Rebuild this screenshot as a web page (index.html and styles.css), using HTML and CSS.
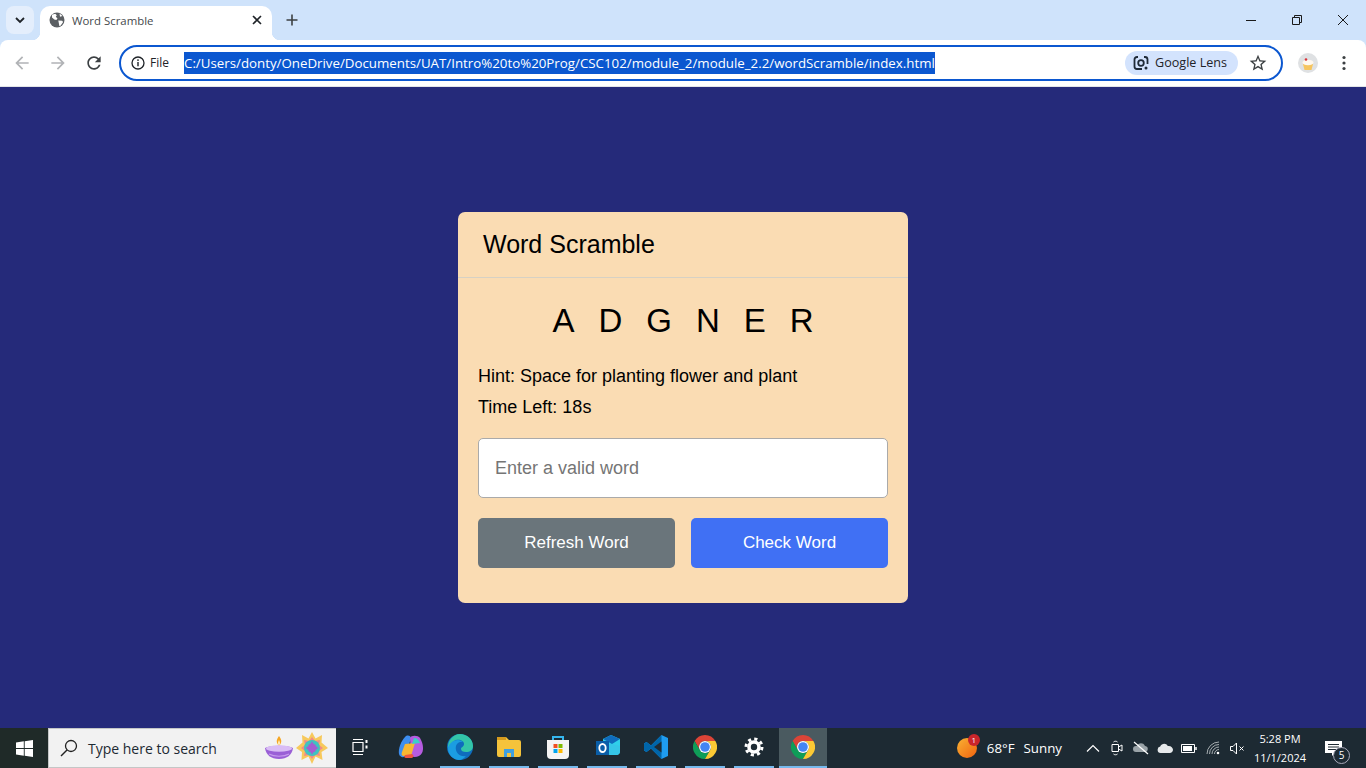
FILE: index.html
```html
<!DOCTYPE html>
<html>
<head>
<meta charset="utf-8">
<title>Word Scramble</title>
<link rel="stylesheet" href="styles.css">
</head>
<body>
<svg class="defs" width="0" height="0">
  <symbol id="chrome" viewBox="0 0 24 24">
    <path fill="#db4437" d="M12 0A12 12 0 0 0 1.6 6L6.8 15A6 6 0 0 1 12 6H22.4A12 12 0 0 0 12 0Z"/>
    <path fill="#0f9d58" d="M1.6 6A12 12 0 0 0 12 24L17.2 15A6 6 0 0 1 6.8 15Z"/>
    <path fill="#fcc934" d="M22.4 6H12A6 6 0 0 1 17.2 15L12 24A12 12 0 0 0 22.4 6Z"/>
    <circle cx="12" cy="12" r="6" fill="#fff"/>
    <circle cx="12" cy="12" r="4.8" fill="#4285f4"/>
  </symbol>
</svg>

<!-- browser top -->
<header class="browser">
  <div class="tabstrip">
    <button class="tabsearch">
      <svg width="12" height="12" viewBox="0 0 12 12"><path d="M2 4l4 4 4-4" fill="none" stroke="#1f2328" stroke-width="1.8"/></svg>
    </button>
    <div class="tab">
      <svg class="favicon" width="16" height="16" viewBox="0 0 16 16"><circle cx="8" cy="8" r="7.5" fill="#5b5f63"/><path fill="#fff" d="M3 2.8l3.2-1 1.6 1.4-1 1.6 1.7 1.6-1.2 1.6-2-.6L3 5.4zM9.3 8.5l3.8.3 1 1.2-2.4 3.6-1.3.6-.6-3.3zM10.5 1.500l3 2.4-2.500.8z"/></svg>
      <span class="tabtitle">Word Scramble</span>
      <svg class="tabclose" width="10" height="10" viewBox="0 0 10 10"><path d="M1 1l8 8M9 1l-8 8" stroke="#1f2328" stroke-width="1.6"/></svg>
    </div>
    <svg class="newtab" width="12" height="12" viewBox="0 0 12 12"><path d="M6 .5v11M.5 6h11" stroke="#3c4043" stroke-width="1.6"/></svg>
    <div class="wincontrols">
      <svg width="10" height="10" viewBox="0 0 10 10"><path d="M0 5.5h10" stroke="#1a1a1a"/></svg>
      <svg width="10" height="10" viewBox="0 0 10 10"><path d="M.5 2.5h7v7h-7zM2.5 2.5v-2h7v7h-2" fill="none" stroke="#1a1a1a"/></svg>
      <svg width="10" height="10" viewBox="0 0 10 10"><path d="M0 0l10 10M10 0L0 10" stroke="#1a1a1a"/></svg>
    </div>
  </div>
  <div class="toolbar">
    <svg class="navicon" width="20" height="20" viewBox="0 0 24 24"><path fill="#b1b3b6" d="M20 11H7.83l5.59-5.59L12 4l-8 8 8 8 1.41-1.41L7.83 13H20v-2z"/></svg>
    <svg class="navicon" width="20" height="20" viewBox="0 0 24 24"><path fill="#b1b3b6" d="M4 11h12.17l-5.59-5.59L12 4l8 8-8 8-1.41-1.41L16.17 13H4v-2z"/></svg>
    <svg class="navicon" width="20" height="20" viewBox="0 0 24 24"><path fill="#3c4043" d="M17.65 6.35C16.2 4.9 14.21 4 12 4c-4.42 0-7.99 3.58-7.99 8s3.57 8 7.99 8c3.73 0 6.84-2.55 7.73-6h-2.08c-.82 2.33-3.04 4-5.65 4-3.31 0-6-2.69-6-6s2.69-6 6-6c1.66 0 3.14.69 4.22 1.78L13 11h7V4l-2.35 2.35z"/></svg>
    <div class="omnibox">
      <svg class="infoicon" width="14" height="14" viewBox="0 0 14 14"><circle cx="7" cy="7" r="6" fill="none" stroke="#1f2328" stroke-width="1.3"/><path d="M7 6v4.2" stroke="#1f2328" stroke-width="1.4"/><circle cx="7" cy="4.1" r=".9" fill="#1f2328"/></svg>
      <span class="filelabel">File</span>
      <span class="url">C:/Users/donty/OneDrive/Documents/UAT/Intro%20to%20Prog/CSC102/module_2/module_2.2/wordScramble/index.html</span>
      <span class="lens">
        <svg width="16" height="16" viewBox="0 0 16 16"><path d="M5 2H4a2.500 2.500 0 0 0-2.500 2.500v7A2.500 2.500 0 0 0 4 14h5M11 2h1a2.500 2.500 0 0 1 2.500 2.500V9" fill="none" stroke="#1f2a37" stroke-width="1.8"/><circle cx="8" cy="8" r="2.800" fill="none" stroke="#1f2a37" stroke-width="1.800"/><circle cx="13" cy="13" r="1.500" fill="#1f2a37"/></svg>
        Google Lens
      </span>
      <svg class="star" width="20" height="20" viewBox="0 0 24 24"><path fill="#3c4043" d="M22 9.240l-7.190-.62L12 2 9.190 8.630 2 9.240l5.460 4.730L5.820 21 12 17.270 18.180 21l-1.630-7.030L22 9.240zM12 15.400l-3.760 2.270 1-4.280-3.320-2.880 4.380-.38L12 6.100l1.710 4.040 4.380.38-3.320 2.880 1 4.280L12 15.400z"/></svg>
    </div>
    <div class="avatar">
      <svg width="20" height="20" viewBox="0 0 20 20"><circle cx="10" cy="10" r="10" fill="#dfe1e3"/><path d="M5 11h10l-1.500 6h-7z" fill="#f6c55f"/><ellipse cx="10" cy="9.500" rx="5.500" ry="2.800" fill="#fff8ee"/><circle cx="8" cy="6.500" r="1.300" fill="#d8333a"/></svg>
    </div>
    <svg class="kebab" width="4" height="16" viewBox="0 0 4 16"><circle cx="2" cy="2.500" r="1.600" fill="#3c4043"/><circle cx="2" cy="8" r="1.600" fill="#3c4043"/><circle cx="2" cy="13.500" r="1.600" fill="#3c4043"/></svg>
  </div>
</header>

<!-- the game -->
<main class="page">
  <section class="card">
    <h2 class="card-title">Word Scramble</h2>
    <div class="card-body">
      <p class="scrambled">ADGNER</p>
      <p class="info">Hint: Space for planting flower and plant</p>
      <p class="info">Time Left: 18s</p>
      <input class="word-input" type="text" placeholder="Enter a valid word">
      <div class="btn-row">
        <button class="btn btn-refresh">Refresh Word</button>
        <button class="btn btn-check">Check Word</button>
      </div>
    </div>
  </section>
</main>

<!-- windows taskbar -->
<footer class="taskbar">
  <div class="start">
    <svg width="17" height="17" viewBox="0 0 17 17"><path fill="#fff" d="M0 2.400l7.800-1.100v6.800H0zM8.700 1.200L17 0v8.100H8.700zM0 9h7.800v6.800L0 14.600zM8.700 9H17v8l-8.300-1.200z"/></svg>
  </div>
  <div class="search">
    <svg width="18" height="18" viewBox="0 0 18 18"><circle cx="11" cy="7" r="5.500" fill="none" stroke="#222" stroke-width="1.300"/><path d="M7 11l-6 6" stroke="#222" stroke-width="1.500"/></svg>
    <span class="search-text">Type here to search</span>
    <svg class="diya" width="30" height="24" viewBox="0 0 30 24"><path d="M15 0c2.500 3.500 3.500 6 0 10-3.500-4-2.500-6.500 0-10z" fill="#f5a623"/><path d="M15 4c1 2 1.500 3.500 0 6-1.500-2.500-1-4 0-6z" fill="#fff3c4"/><path d="M1 12c6-3 22-3 28 0-1 7-6 11-14 11S2 19 1 12z" fill="#9a5fd6"/><ellipse cx="15" cy="12.500" rx="13" ry="3.200" fill="#d9bdf5"/><path d="M5 18c5 3 15 3 20 0" fill="none" stroke="#c79bee" stroke-width="1.200"/></svg>
    <svg class="rangoli" width="32" height="32" viewBox="0 0 32 32"><path d="M16 0l3.500 6.500L26 3l-.5 7.500L32 16l-6.500 4 1 8-7-3.500L16 32l-3.500-7.500-7 3.500.5-8L0 16l6.500-5.500L6 3l6.500 3.500z" fill="#f7c95c"/><path d="M16 5l3 4 5-1-1 5 4 3-4 3 1 5-5-1-3 4-3-4-5 1 1-5-4-3 4-3-1-5 5 1z" fill="#f08a8a"/><circle cx="16" cy="16" r="8" fill="#3fc4c0"/><path d="M16 9l2 4.500 4.500 2.500-4.500 2.500-2 4.500-2-4.500-4.500-2.500 4.500-2.500z" fill="#a35fd0"/><circle cx="16" cy="16" r="4.500" fill="#a35fd0"/></svg>
  </div>
  <div class="apps">
    <div class="app taskview">
      <svg width="16" height="16" viewBox="0 0 16 16"><path d="M1 3.500h10v9H1zM1 .5h10M1 15.500h10" fill="none" stroke="#fff" stroke-width="1.200"/><path d="M14.500 1v3M14.500 6.500v3" stroke="#fff" stroke-width="2"/></svg>
    </div>
    <div class="app">
      <svg width="26" height="24" viewBox="0 0 26 24"><path d="M7 2c2-2 5-2 6 1l-5 17c-1 3-6 3-7-1-1-5 2-13 6-17z" fill="#3d8ef0"/><path d="M12 3c1-3 8-3 10 0 3 5 4 11 2 15-2 4-8 5-11 3z" fill="#b65ce0"/><path d="M7 9l10-1-4 13H6c-2 0-3-1-2-4z" fill="#f7b733"/><path d="M16 3c3 0 5 2 6 5l-8 1z" fill="#3bd0c7"/><path d="M7 20l7-1c2 1 2 3 0 4H8c-2 0-2-2-1-3z" fill="#f0553f"/></svg>
    </div>
    <div class="app running">
      <svg width="26" height="26" viewBox="0 0 26 26"><circle cx="13" cy="13" r="13" fill="#0f6cbd"/><path d="M13 0c7 0 13 5 13 12 0 4-3 6-7 6-3 0-5-1-5-3 0-2 3-2 3-5 0-3-4-5-8-4C6 7 2 11 1 15 0 7 6 0 13 0z" fill="#33c5a8"/><path d="M1 15c0-5 5-9 10-9 2 0 4 1 5 2-5-1-8 3-7 8 1 4 5 7 10 6-2 2-4 4-7 4C7 26 1 21 1 15z" fill="#1b9de2"/></svg>
    </div>
    <div class="app running">
      <svg width="26" height="22" viewBox="0 0 26 22"><path d="M1 3a2 2 0 0 1 2-2h7l3 3h10a2 2 0 0 1 2 2v13a2 2 0 0 1-2 2H3a2 2 0 0 1-2-2z" fill="#f5c33b"/><path d="M1 1h9v3H1z" fill="#d59a1e"/><path d="M8 13h10v8h-3v-4h-4v4H8z" fill="#3f9fe0"/></svg>
    </div>
    <div class="app running">
      <svg width="24" height="24" viewBox="0 0 24 24"><path d="M7 5V2h10v3" fill="none" stroke="#35b6ef" stroke-width="2"/><path d="M1 5h22v15a4 4 0 0 1-4 4H5a4 4 0 0 1-4-4z" fill="#f4f4f4"/><path d="M7.500 9h4v4h-4z" fill="#f25022"/><path d="M12.500 9h4v4h-4z" fill="#7fba00"/><path d="M7.500 14h4v4h-4z" fill="#00a4ef"/><path d="M12.500 14h4v4h-4z" fill="#ffb900"/></svg>
    </div>
    <div class="app running">
      <svg width="25" height="24" viewBox="0 0 25 24"><path d="M8 4l8-4 9 4v12a4 4 0 0 1-4 4H8z" fill="#2fd0ea"/><path d="M8 4l8-4 9 4-8 5z" fill="#0f6cbd"/><path d="M8 10l9-1 8 2v5a4 4 0 0 1-4 4H8z" fill="#35c6e8"/><path d="M1 6h13v14H1z" fill="#0a5ea8"/><ellipse cx="7.500" cy="13" rx="3.200" ry="4" fill="none" stroke="#fff" stroke-width="1.800"/></svg>
    </div>
    <div class="app running">
      <svg width="24" height="24" viewBox="0 0 24 24"><path d="M17.500 0L24 3v18l-6.500 3L7 13.500 2.500 17 0 15.500V8.500L2.500 7 7 10.500z" fill="#1f9cf0"/><path d="M17.500 0L7 10.500 2.500 7 0 8.500v7L2.500 17 7 13.500 17.500 24z" fill="#0065a9"/><path d="M17.500 6.500L10 12l7.500 5.500z" fill="#1e2a33"/></svg>
    </div>
    <div class="app running">
      <svg width="24" height="24"><use href="#chrome"/></svg>
    </div>
    <div class="app running">
      <svg width="20" height="20" viewBox="0 0 20 20"><circle cx="10" cy="10" r="5" fill="none" stroke="#fff" stroke-width="3.600"/><circle cx="10" cy="10" r="8" fill="none" stroke="#fff" stroke-width="3" stroke-dasharray="3.140 3.140"/></svg>
    </div>
    <div class="app running active">
      <svg width="24" height="24"><use href="#chrome"/></svg>
    </div>
  </div>
  <div class="tray">
    <div class="weather">
      <span class="sun"><span class="sun-badge">1</span></span>
      <span class="temp">68°F</span>
      <span class="cond">Sunny</span>
    </div>
    <div class="trayicons">
      <span class="slot"><svg width="14" height="8" viewBox="0 0 14 8"><path d="M1 7.500l6-6 6 6" fill="none" stroke="#fff" stroke-width="1.200"/></svg></span>
      <span class="slot"><svg width="12" height="16" viewBox="0 0 12 16"><path d="M1 4.500h6.500v7H1zM7.500 7l3.500-2v6l-3.500-2zM2.500 2c1-1 3-1 4 0M2.500 14c1 1 3 1 4 0" fill="none" stroke="#fff"/></svg></span>
      <span class="slot"><svg width="16" height="14" viewBox="0 0 16 14"><path d="M3 11a3 3 0 0 1 0-6h1c1-3 6-4 8 0 3 0 4 4 1 6z" fill="#9aa3a8"/><path d="M1 1l14 12" stroke="#fff" stroke-width="1.200"/></svg></span>
      <span class="slot"><svg width="16" height="10" viewBox="0 0 16 10"><path d="M3.500 10a3.300 3.300 0 0 1-.3-6.500C4.500.5 9-.5 10.800 3c3-.5 5.200 1.500 5.200 3.800 0 2-1.500 3.200-3.200 3.200z" fill="#e6e9eb"/></svg></span>
      <span class="slot"><svg width="16" height="9" viewBox="0 0 16 9"><path d="M.5.5h13v8H.5z" fill="none" stroke="#fff"/><path d="M2 2h9v5H2z" fill="#fff"/><path d="M15 3v3" stroke="#fff" stroke-width="1.500"/></svg></span>
      <span class="slot"><svg width="14" height="14" viewBox="0 0 14 14"><path d="M1 13A12 12 0 0 1 13 1M3.500 13A9.500 9.500 0 0 1 13 3.500M6 13a7 7 0 0 1 7-7M8.500 13A4.500 4.500 0 0 1 13 8.500" fill="none" stroke="#c9ced1" stroke-width=".8"/><circle cx="12" cy="12" r="1.300" fill="#fff"/></svg></span>
      <span class="slot"><svg width="15" height="13" viewBox="0 0 15 13"><path d="M.5 4.500h2.500L6.500 1v11L3 8.500H.5z" fill="none" stroke="#fff"/><path d="M9.500 4.500l4 4M13.500 4.500l-4 4" stroke="#fff"/></svg></span>
    </div>
    <div class="clock">
      <span>5:28 PM</span>
      <span>11/1/2024</span>
    </div>
    <div class="notif">
      <svg width="17" height="15" viewBox="0 0 17 15"><path d="M0 0h17v12h-7l-3 3v-3H0z" fill="#fff"/><path d="M3 3.500h11M3 6h11M3 8.500h8" stroke="#1e2a33"/></svg>
      <span class="notif-count">5</span>
    </div>
  </div>
</footer>
</body>
</html>
```

FILE: styles.css
```css
* {
  box-sizing: border-box;
}
html, body {
  height: 100%;
}
body {
  margin: 0;
  display: flex;
  flex-direction: column;
  height: 768px;
  overflow: hidden;
  background-color: #252a7a;
  font-family: "Liberation Sans", Arial, sans-serif;
}
.defs {
  position: absolute;
}

/* browser top */
.browser {
  height: 87px;
  flex: none;
  background-color: #cfe3fb;
}
.tabstrip {
  height: 40px;
  display: flex;
  align-items: flex-end;
  padding-left: 6px;
}
.tabsearch {
  width: 28px;
  height: 28px;
  margin-bottom: 6px;
  border: none;
  border-radius: 8px;
  background-color: #e4eefc;
  display: flex;
  align-items: center;
  justify-content: center;
  padding: 0;
}
.tab {
  position: relative;
  width: 232px;
  height: 34px;
  margin-left: 6px;
  padding: 0 10px 6px 9px;
  background-color: #fff;
  border-radius: 10px 10px 0 0;
  display: flex;
  align-items: center;
}
/* little curves where the tab meets the toolbar */
.tab::before, .tab::after {
  content: "";
  position: absolute;
  bottom: 0;
  width: 8px;
  height: 8px;
}
.tab::before {
  left: -8px;
  background: radial-gradient(circle at 0 0, transparent 8px, #fff 8.500px);
}
.tab::after {
  right: -8px;
  background: radial-gradient(circle at 100% 0, transparent 8px, #fff 8.500px);
}
.tabtitle {
  margin-left: 7px;
  flex: 1;
  font-family: "Open Sans", sans-serif;
  font-size: 11.400px;
  color: #45494d;
}
.newtab {
  margin: 0 0 14px 14px;
}
.wincontrols {
  margin-left: auto;
  height: 40px;
  display: flex;
  align-items: center;
  gap: 36px;
  padding: 0 18px 0 0;
}
.toolbar {
  height: 47px;
  background-color: #fff;
  border-bottom: 1px solid #e3e5e8;
  border-radius: 8px 8px 0 0;
  display: flex;
  align-items: center;
  padding: 0 13px 1px 12px;
}
.navicon {
  margin-right: 16px;
}
.navicon:nth-child(3) {
  margin-right: 15px;
}
.omnibox {
  width: 1164px;
  height: 36px;
  border: 2px solid #0b57d0;
  border-radius: 18px;
  display: flex;
  align-items: center;
  padding: 0 13px 0 10px;
  font-family: "Open Sans", sans-serif;
  color: #1f2328;
}
.filelabel {
  margin-left: 5px;
  font-size: 12px;
  width: 34px;
}
.url {
  background-color: #0b57d0;
  color: #fff;
  font-size: 13.300px;
  line-height: 22px;
  height: 22px;
  white-space: nowrap;
}
.lens {
  margin-left: auto;
  height: 24px;
  width: 113px;
  border-radius: 12px;
  background-color: #d3e3fd;
  display: flex;
  align-items: center;
  gap: 6px;
  padding-left: 8px;
  font-size: 12.600px;
  white-space: nowrap;
}
.star {
  margin-left: 10px;
}
.avatar {
  margin-left: 15px;
  width: 20px;
  height: 20px;
}
.kebab {
  margin-left: 24px;
}

/* the game */
.page {
  flex: 1;
  display: flex;
  align-items: center;
  justify-content: center;
}
.card {
  width: 450px;
  background-color: #fadcb3;
  border-radius: 7px;
}
.card-title {
  margin: 0;
  height: 66px;
  padding-left: 25px;
  line-height: 65px;
  font-size: 25px;
  font-weight: 400;
  color: #000;
  border-bottom: 1px solid #d6d1c4;
}
.card-body {
  padding: 20px 20px 35px;
}
.scrambled {
  margin: 0 -24px 21px 0;
  font-size: 33px;
  line-height: 46px;
  letter-spacing: 24px;
  text-align: center;
  color: #000;
}
.info {
  margin: 0 0 9px;
  font-size: 18px;
  line-height: 22px;
  color: #000;
}
.word-input {
  display: block;
  width: 100%;
  height: 60px;
  margin-top: 20px;
  padding: 0 16px;
  border: 1px solid #aaa;
  border-radius: 5px;
  font-family: inherit;
  font-size: 18px;
  background-color: #fff;
}
.word-input::placeholder {
  color: #757575;
}
.btn-row {
  display: flex;
  gap: 16px;
  margin-top: 20px;
}
.btn {
  flex: 1;
  height: 50px;
  border: none;
  border-radius: 5px;
  font-family: inherit;
  font-size: 17px;
  color: #fff;
}
.btn-refresh {
  background-color: #6a757b;
}
.btn-check {
  background-color: #4070f4;
}

/* windows taskbar */
.taskbar {
  height: 40px;
  flex: none;
  background-color: #1d2a33;
  display: flex;
  color: #fff;
  font-family: "Open Sans", sans-serif;
}
.start {
  width: 48px;
  background-color: #1f2a28;
  display: flex;
  align-items: center;
  justify-content: center;
}
.search {
  width: 288px;
  background-color: #f2f2f2;
  border-top: 1px solid #c4c6c6;
  border-left: 1px solid #c4c6c6;
  border-bottom: 1px solid #c4c6c6;
  display: flex;
  align-items: center;
  padding-left: 11px;
  color: #1d2a33;
}
.search-text {
  margin-left: 10px;
  font-size: 14px;
  width: 176px;
}
.diya {
  flex: none;
}
.rangoli {
  flex: none;
  margin-left: 2px;
}
.apps {
  display: flex;
  gap: 1px;
  padding-left: 2px;
}
.app {
  width: 48px;
  height: 40px;
  display: flex;
  align-items: center;
  justify-content: center;
  padding-bottom: 2px;
}
.taskview {
  padding-right: 4px;
}
.app.running {
  background: linear-gradient(#76b9ed, #76b9ed) center bottom / 40px 2px no-repeat;
}
.app.active {
  background: linear-gradient(#76b9ed, #76b9ed) center bottom / 100% 2px no-repeat, #4a5a60;
}
.tray {
  margin-left: auto;
  display: flex;
  align-items: center;
}
.weather {
  display: flex;
  align-items: center;
  font-size: 13.300px;
  margin-right: 19px;
}
.sun {
  position: relative;
  width: 20px;
  height: 20px;
  border-radius: 50%;
  background: linear-gradient(135deg, #f9b233, #f0620f);
  margin-right: 10px;
}
.sun-badge {
  position: absolute;
  top: -4px;
  right: -3px;
  width: 12px;
  height: 12px;
  border-radius: 50%;
  background-color: #c9252b;
  font-size: 8px;
  line-height: 12px;
  text-align: center;
}
.temp {
  margin-right: 9px;
}
.trayicons {
  display: flex;
  align-items: center;
}
.slot {
  width: 24px;
  display: flex;
  align-items: center;
  justify-content: center;
}
.clock {
  display: flex;
  flex-direction: column;
  align-items: center;
  width: 62px;
  font-size: 11px;
  line-height: 19px;
}
.notif {
  position: relative;
  width: 50px;
  height: 40px;
  margin-left: 5px;
  padding: 11px 0 0 9px;
}
.notif-count {
  position: absolute;
  left: 17px;
  top: 19px;
  width: 17px;
  height: 17px;
  border: 1px solid #aab;
  border-radius: 50%;
  background-color: #1d2a33;
  font-size: 10px;
  line-height: 15px;
  text-align: center;
}
```
